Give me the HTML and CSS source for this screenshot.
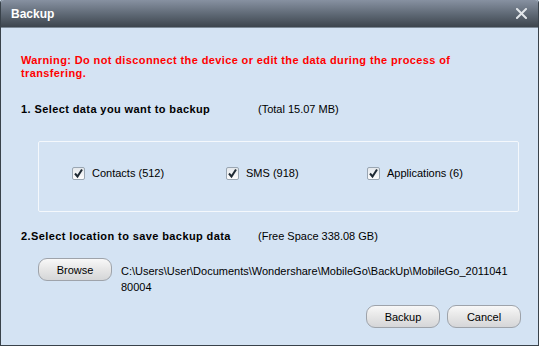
FILE: index.html
```html
<!DOCTYPE html>
<html lang="en">
<head>
  <meta charset="UTF-8">
  <title>Backup</title>
  <link rel="stylesheet" href="styles.css">
</head>
<body>
  <div class="window">
    <div class="title-bar">
      <h1>Backup</h1>
      <svg class="close" width="11" height="11" viewBox="0 0 11 11">
        <path d="M1 1 L10 10 M10 1 L1 10" stroke="#e2e6ea" stroke-width="2" stroke-linecap="square"/>
      </svg>
    </div>

    <div class="content">
      <p class="warning">Warning: Do not disconnect the device or edit the data during the process of transfering.</p>

      <div class="step step-one">
        <span class="step-label">1. Select data you want to backup</span>
        <span class="step-info">(Total 15.07 MB)</span>
      </div>

      <div class="data-box">
        <label class="check-item">
          <span class="check"><svg width="13" height="13" viewBox="0 0 13 13"><path d="M3 6.5 L5.5 9.5 L10 2.5" fill="none" stroke="#1f2a33" stroke-width="2"/></svg></span>
          Contacts (512)
        </label>
        <label class="check-item">
          <span class="check"><svg width="13" height="13" viewBox="0 0 13 13"><path d="M3 6.5 L5.5 9.5 L10 2.5" fill="none" stroke="#1f2a33" stroke-width="2"/></svg></span>
          SMS (918)
        </label>
        <label class="check-item">
          <span class="check"><svg width="13" height="13" viewBox="0 0 13 13"><path d="M3 6.5 L5.5 9.5 L10 2.5" fill="none" stroke="#1f2a33" stroke-width="2"/></svg></span>
          Applications (6)
        </label>
      </div>

      <div class="step step-two">
        <span class="step-label">2.Select location to save backup data</span>
        <span class="step-info">(Free Space 338.08 GB)</span>
      </div>

      <div class="location">
        <button class="btn">Browse</button>
        <div class="path">C:\Users\User\Documents\Wondershare\MobileGo\BackUp\MobileGo_2011041<br>80004</div>
      </div>

      <div class="footer">
        <button class="btn">Backup</button>
        <button class="btn">Cancel</button>
      </div>
    </div>
  </div>
</body>
</html>
```

FILE: styles.css
```css
* {
  margin: 0;
  padding: 0;
  box-sizing: border-box;
  font-family: 'Liberation Sans', Arial, sans-serif;
}

body {
  background: #d4e3f3;
  width: 539px;
  height: 346px;
  overflow: hidden;
}

.window {
  width: 539px;
  height: 346px;
  display: flex;
  flex-direction: column;
  background: #d4e3f3;
  border: 1px solid #39424a;
  border-top: none;
  border-radius: 3px 3px 0 0;
}

.title-bar {
  height: 28px;
  display: flex;
  justify-content: space-between;
  align-items: center;
  padding: 0 11px 0 10px;
  background: linear-gradient(#8791a1, #5d6773 55%, #3d454d);
  border-bottom: 1px solid #7d8a97;
  border-radius: 3px 3px 0 0;
}

.title-bar h1 {
  font-size: 12px;
  font-weight: bold;
  color: #fff;
}

.content {
  flex: 1;
  padding: 26px 17px 0 20px;
  font-size: 11px;
  color: #000;
}

.warning {
  color: #ff0000;
  font-weight: bold;
  line-height: 13px;
  letter-spacing: 0.38px;
  width: 450px;
}

.step {
  display: flex;
  line-height: 13px;
}

.step-one {
  margin-top: 23px;
}

.step-two {
  margin-top: 18px;
}

.step-label {
  width: 237px;
  font-weight: bold;
  letter-spacing: 0.4px;
}

.data-box {
  margin: 25px 0 0 17px;
  width: 481px;
  height: 71px;
  border: 1px solid #f4f8fc;
  border-radius: 2px;
  padding: 25px 0 0 33px;
  display: grid;
  grid-template-columns: 154px 141px 1fr;
  align-items: start;
}

.check-item {
  display: flex;
  align-items: center;
  gap: 7px;
  line-height: 13px;
}

.check {
  width: 13px;
  height: 13px;
  border: 1px solid #9aa6b2;
  border-radius: 2px;
  background: linear-gradient(#e4e8ec, #fdfdfd);
  display: flex;
}

.check svg {
  margin: -1px;
}

.location {
  display: flex;
  align-items: flex-start;
  gap: 9px;
  margin: 15px 0 0 17px;
}

.path {
  line-height: 16px;
  padding-top: 5px;
}

.btn {
  width: 74px;
  height: 23px;
  border: 1px solid #9ea3aa;
  border-radius: 9px;
  background: linear-gradient(#f8f8f8, #e6e6e6 50%, #d5d6d8);
  font-size: 11px;
  color: #000;
  flex-shrink: 0;
}

.footer {
  display: flex;
  justify-content: flex-end;
  gap: 7px;
  margin-top: 10px;
}
```
